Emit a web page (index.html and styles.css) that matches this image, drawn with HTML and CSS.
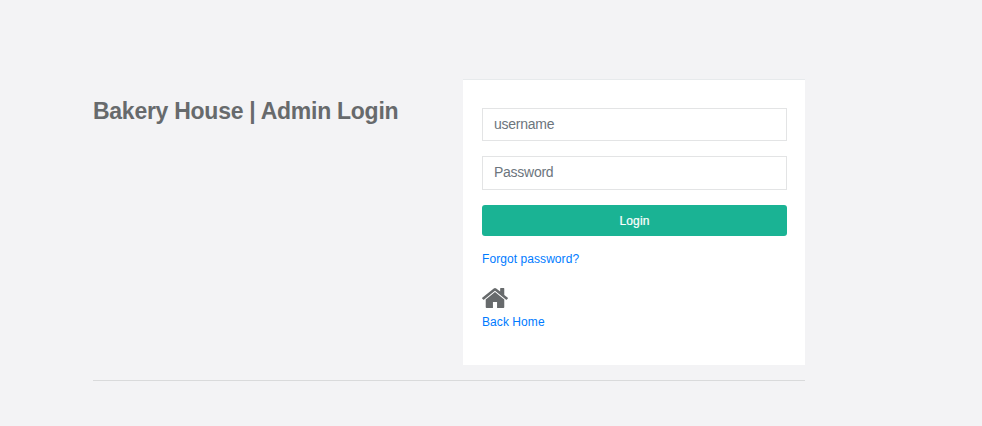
FILE: index.html
```html
<!DOCTYPE html>
<html lang="en">
<head>
<meta charset="utf-8">
<title>Bakery House | Admin Login</title>
<link rel="stylesheet" href="styles.css">
</head>
<body>
<main class="login">
  <div class="columns">
    <h2 class="title">Bakery House | Admin Login</h2>
    <form class="card">
      <input class="field" type="text" placeholder="username">
      <input class="field field-password" type="password" placeholder="Password">
      <button class="submit" type="button">Login</button>
      <a class="link" href="#">Forgot password?</a>
      <svg class="home" viewBox="24 29 1616 1283" preserveAspectRatio="none" aria-hidden="true"><path d="M1408 768v480q0 26-19 45t-45 19H960V928H704v384H320q-26 0-45-19t-19-45V768q0-1 .5-3t.5-3l575-474 575 474q1 2 1 6zm223-69-62 74q-8 9-21 11h-3q-13 0-21-7L832 200 140 777q-12 8-24 7-13-2-21-11l-62-74q-8-10-7-23.500t11-21.500L756 55q32-26 76-26t76 26l244 204V64q0-14 9-23t23-9h192q14 0 23 9t9 23v408l219 182q10 8 11 21.500t-7 23.500z"/></svg>
      <a class="link" href="#">Back Home</a>
    </form>
  </div>
  <hr class="rule">
</main>
</body>
</html>
```
FILE: styles.css
```css
* { box-sizing: border-box; }
body {
  margin: 0;
  background: #f3f3f5;
  color: #676a6c;
  font: 12px/18px "Liberation Sans", Arial, sans-serif;
}
.login { width: 712px; margin: 79px 0 0 93px; }
.columns { display: flex; justify-content: space-between; align-items: flex-start; }
.title { margin: 18px 0 0; font-size: 23px; line-height: 28px; font-weight: 700; letter-spacing: -0.27px; white-space: nowrap; }
.card {
  display: flex;
  flex-direction: column;
  align-items: flex-start;
  width: 342px;
  height: 286px;
  padding: 28px 18px 0 19px;
  background: #fff;
  border-top: 1px solid #e7eaec;
}
.field {
  width: 100%;
  height: 33px;
  margin: 0 0 15px;
  padding: 0 11px 2px;
  border: 1px solid #e3e4e5;
  border-radius: 0;
  background: #fff;
  font: 14px "Liberation Sans", Arial, sans-serif;
  letter-spacing: -0.26px;
}
.field-password { height: 34px; }
.field::placeholder { color: #6c757d; opacity: 1; }
.submit {
  width: 100%;
  height: 31px;
  margin: 0 0 14px;
  border: 0;
  border-radius: 3px;
  background: #1ab394;
  color: #fff;
  font: 12px "Liberation Sans", Arial, sans-serif;
  letter-spacing: 0.1px;
  -webkit-text-stroke: 0.2px #fff;
}
.link { color: #007bff; letter-spacing: 0.07px; text-decoration: none; }
.home { width: 26px; height: 20px; margin: 20px 0 5px; fill: #676a6c; }
.rule { margin: 15px 0 0; border: 0; border-top: 1px solid #d9dadb; }
```
